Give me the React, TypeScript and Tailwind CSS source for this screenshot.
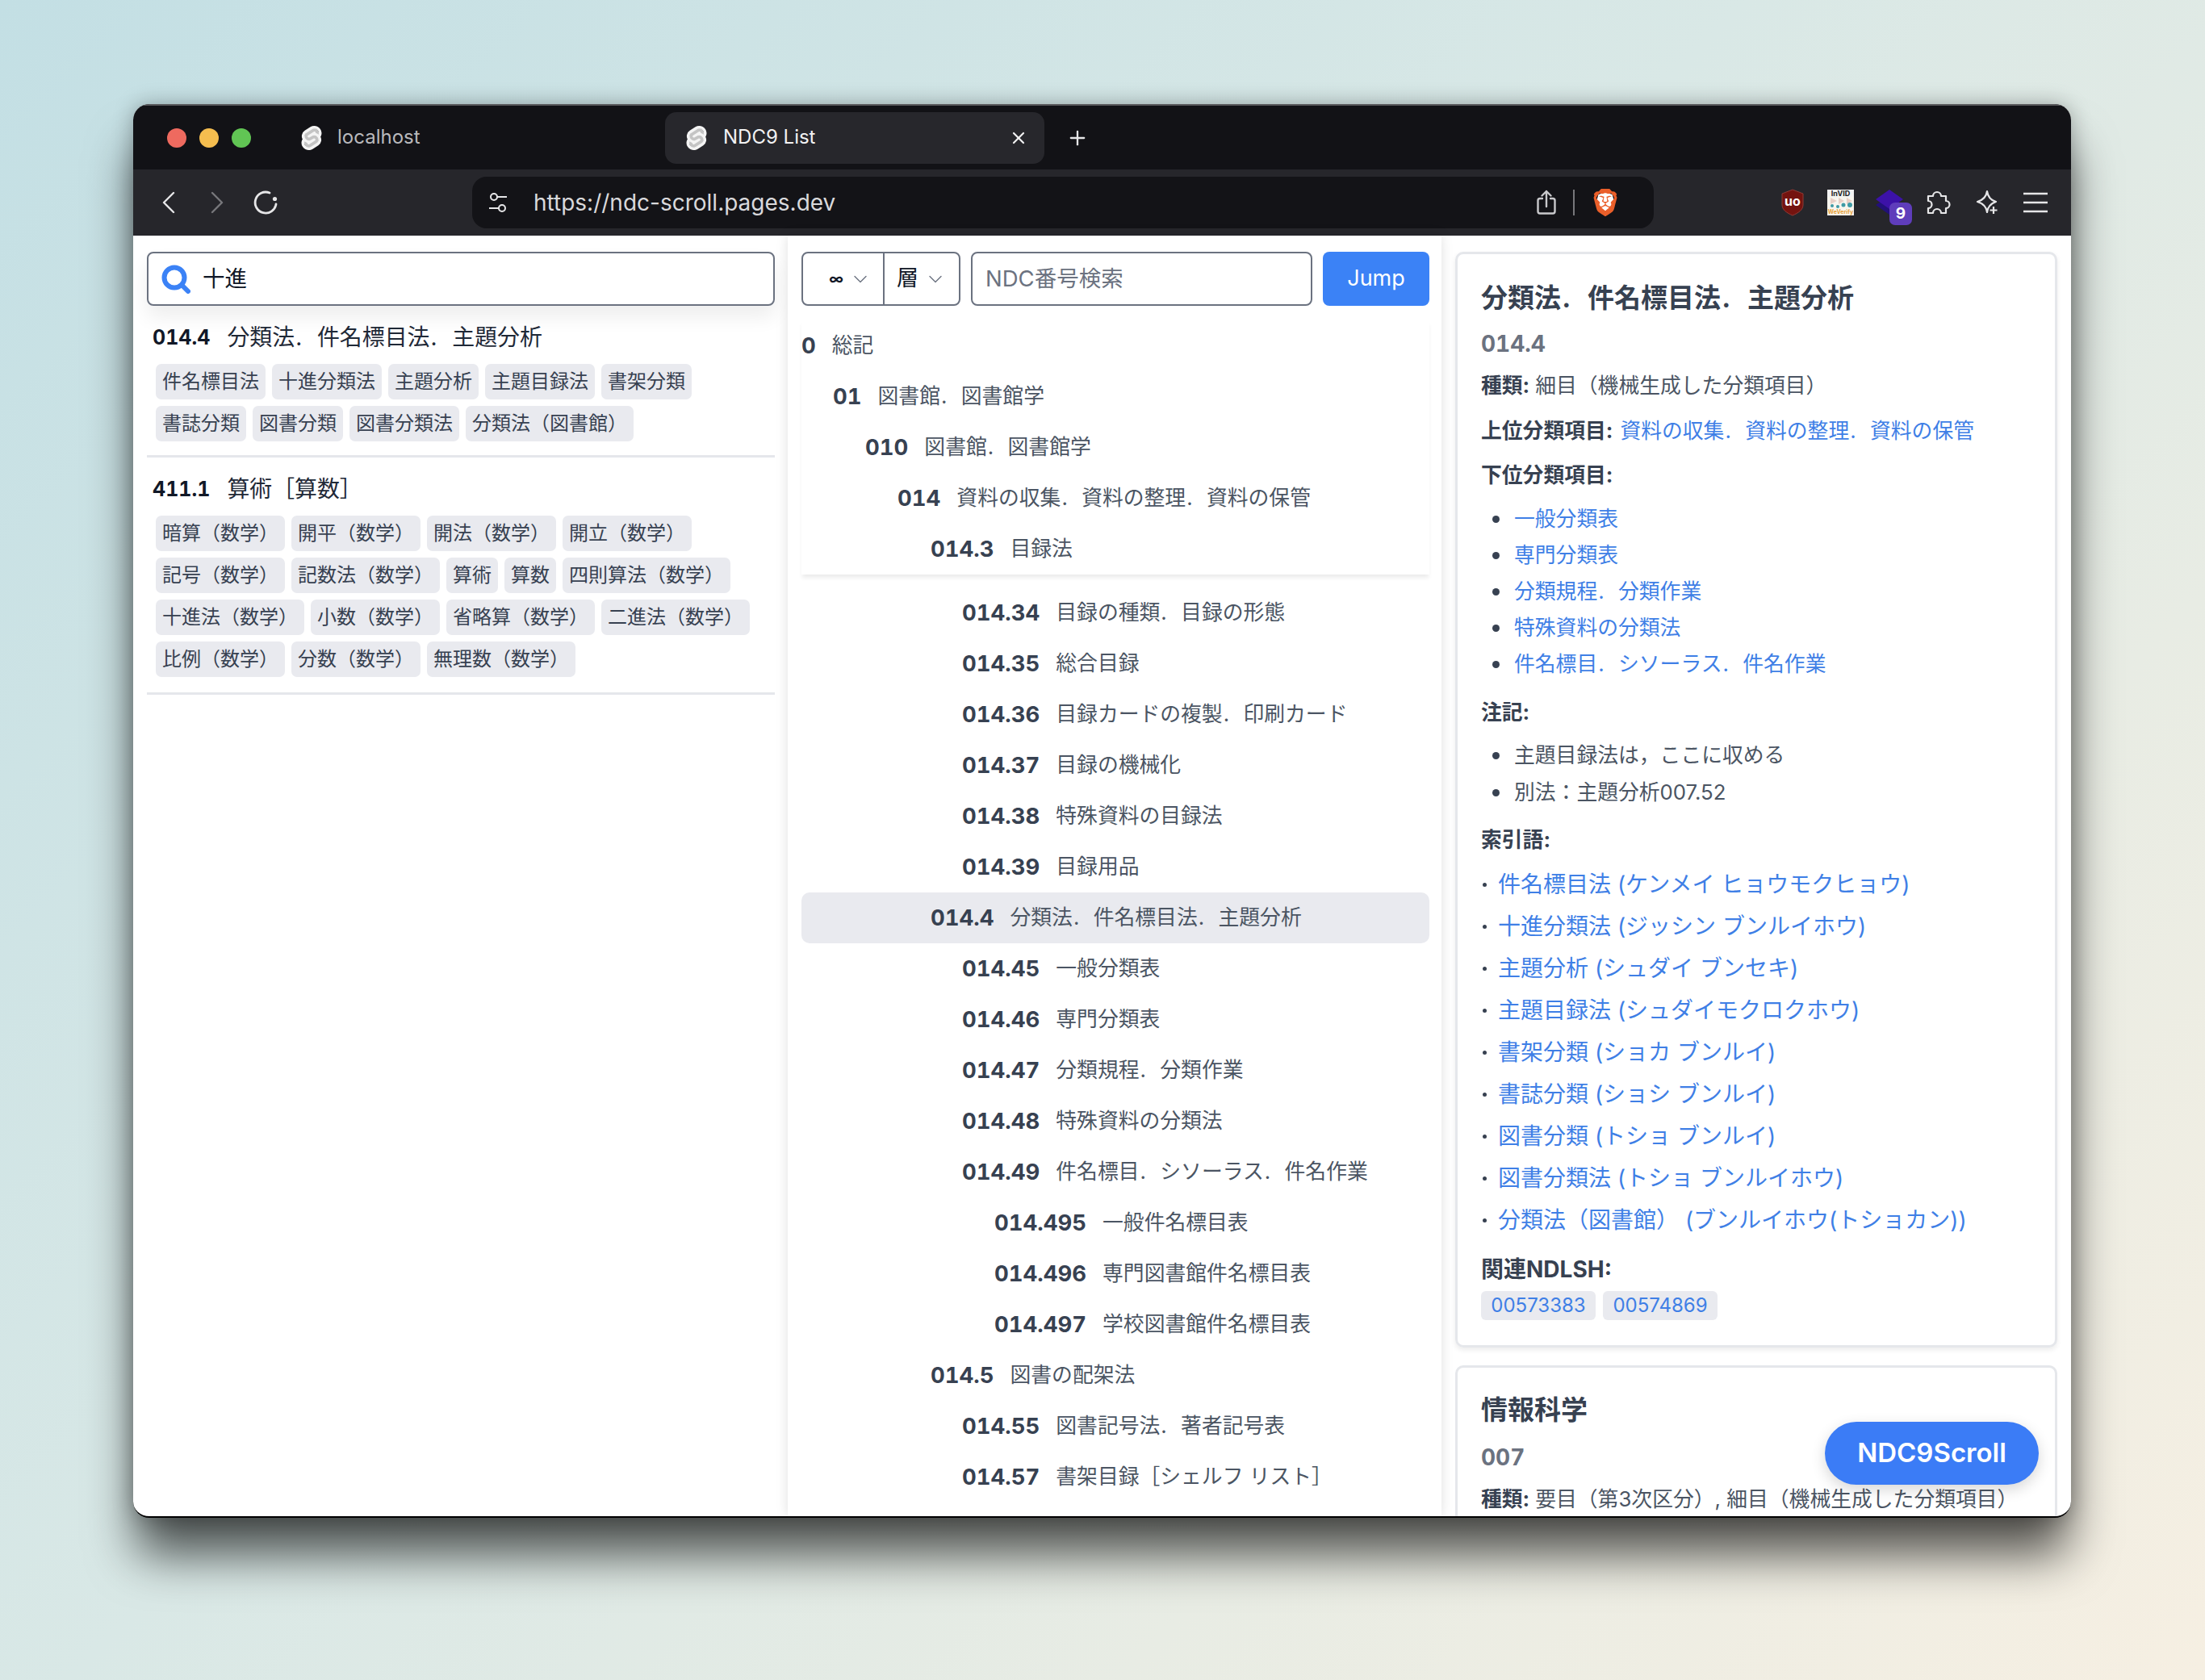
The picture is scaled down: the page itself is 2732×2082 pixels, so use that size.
import { ChevronDown, Plus, X } from "lucide-react";
import { SiBrave, SiSvelte } from "react-icons/si";

type Row = { no: string; text: string; level: number; active?: boolean };

const pinned: Row[] = [
  { no: "0", text: "総記", level: 0 },
  { no: "01", text: "図書館．図書館学", level: 1 },
  { no: "010", text: "図書館．図書館学", level: 2 },
  { no: "014", text: "資料の収集．資料の整理．資料の保管", level: 3 },
  { no: "014.3", text: "目録法", level: 4 },
];

const rows: Row[] = [
  { no: "014.34", text: "目録の種類．目録の形態", level: 5 },
  { no: "014.35", text: "総合目録", level: 5 },
  { no: "014.36", text: "目録カードの複製．印刷カード", level: 5 },
  { no: "014.37", text: "目録の機械化", level: 5 },
  { no: "014.38", text: "特殊資料の目録法", level: 5 },
  { no: "014.39", text: "目録用品", level: 5 },
  { no: "014.4", text: "分類法．件名標目法．主題分析", level: 4, active: true },
  { no: "014.45", text: "一般分類表", level: 5 },
  { no: "014.46", text: "専門分類表", level: 5 },
  { no: "014.47", text: "分類規程．分類作業", level: 5 },
  { no: "014.48", text: "特殊資料の分類法", level: 5 },
  { no: "014.49", text: "件名標目．シソーラス．件名作業", level: 5 },
  { no: "014.495", text: "一般件名標目表", level: 6 },
  { no: "014.496", text: "専門図書館件名標目表", level: 6 },
  { no: "014.497", text: "学校図書館件名標目表", level: 6 },
  { no: "014.5", text: "図書の配架法", level: 4 },
  { no: "014.55", text: "図書記号法．著者記号表", level: 5 },
  { no: "014.57", text: "書架目録［シェルフ リスト］", level: 5 },
];

const indent = ["pl-0", "pl-[39px]", "pl-[79px]", "pl-[119px]", "pl-[160px]", "pl-[199px]", "pl-[239px]"];

const results = [
  {
    no: "014.4",
    title: "分類法．件名標目法．主題分析",
    tags: ["件名標目法", "十進分類法", "主題分析", "主題目録法", "書架分類", "書誌分類", "図書分類", "図書分類法", "分類法（図書館）"],
  },
  {
    no: "411.1",
    title: "算術［算数］",
    tags: [
      "暗算（数学）",
      "開平（数学）",
      "開法（数学）",
      "開立（数学）",
      "記号（数学）",
      "記数法（数学）",
      "算術",
      "算数",
      "四則算法（数学）",
      "十進法（数学）",
      "小数（数学）",
      "省略算（数学）",
      "二進法（数学）",
      "比例（数学）",
      "分数（数学）",
      "無理数（数学）",
    ],
  },
];

const children = ["一般分類表", "専門分類表", "分類規程．分類作業", "特殊資料の分類法", "件名標目．シソーラス．件名作業"];
const notes = ["主題目録法は，ここに収める", "別法：主題分析007.52"];
const indexTerms = [
  "件名標目法 (ケンメイ ヒョウモクヒョウ)",
  "十進分類法 (ジッシン ブンルイホウ)",
  "主題分析 (シュダイ ブンセキ)",
  "主題目録法 (シュダイモクロクホウ)",
  "書架分類 (ショカ ブンルイ)",
  "書誌分類 (ショシ ブンルイ)",
  "図書分類 (トショ ブンルイ)",
  "図書分類法 (トショ ブンルイホウ)",
  "分類法（図書館） (ブンルイホウ(トショカン))",
];

// the full-width period sits low and left in the reference font
function Ja({ text }: { text: string }) {
  const parts = text.split("．");
  return (
    <>
      {parts.map((p, i) => (
        <span key={i}>
          {p}
          {i < parts.length - 1 ? <span className="inline-block w-[1em] pl-[0.04em]">.</span> : null}
        </span>
      ))}
    </>
  );
}

function SvelteIcon() {
  return (
    <svg width="30" height="30" viewBox="0 0 24 24">
      <ellipse cx="12" cy="12" rx="7.500" ry="10.500" transform="rotate(18 12 12)" fill="#c4c4c4" />
      <svg width="24" height="24" viewBox="0 0 24 24">
        <SiSvelte size={24} color="#f4f4f4" />
      </svg>
    </svg>
  );
}

function TreeRow({ row }: { row: Row }) {
  return (
    <div className={`flex h-[63px] items-center rounded-[10px] ${indent[row.level]} ${row.active ? "bg-[#e9eaef]" : ""}`}>
      <span className="text-[27.500px] font-bold tabular-nums text-[#374151]">{row.no}</span>
      <span className="ml-[20px] text-[25.800px] text-[#4b5563]">
        <Ja text={row.text} />
      </span>
    </div>
  );
}

function Toolbar() {
  return (
    <div className="flex h-[82px] items-center bg-[#26262b] text-[#e6e6e8]">
      <div className="flex w-[420px] items-center pl-[14px]">
        <span className="flex w-[60px] justify-center">
          <svg width="18" height="28" viewBox="0 0 18 28" fill="none" stroke="currentColor" strokeWidth="2.400" strokeLinecap="round" strokeLinejoin="round">
            <path d="M15 2 3 14l12 12" />
          </svg>
        </span>
        <span className="flex w-[60px] justify-center text-[#77777b]">
          <svg width="18" height="28" viewBox="0 0 18 28" fill="none" stroke="currentColor" strokeWidth="2.400" strokeLinecap="round" strokeLinejoin="round">
            <path d="M3 2l12 12L3 26" />
          </svg>
        </span>
        <span className="flex w-[60px] justify-center">
          <svg width="30" height="30" viewBox="0 0 30 30" fill="none" stroke="currentColor" strokeWidth="2.800" strokeLinecap="round">
            <path d="M20 3A13 13 0 1 0 28 17" />
            <circle cx="26.500" cy="10.500" r="2.600" fill="currentColor" stroke="none" />
          </svg>
        </span>
      </div>
      <div className="flex h-[64px] w-[1464px] items-center rounded-[18px] bg-[#131317] pl-[20px] pr-[43px]">
        <svg width="24" height="26" viewBox="0 0 24 26" fill="none" stroke="currentColor" strokeWidth="2">
          <circle cx="7" cy="6" r="4" />
          <path d="M11 6h12M1 20h12" />
          <circle cx="17" cy="20" r="4" />
        </svg>
        <span className="ml-[32px] text-[28px] text-[#d9d9dc]">https://ndc-scroll.pages.dev</span>
        <div className="ml-auto flex items-center">
          <svg width="24" height="32" viewBox="0 0 24 32" fill="none" stroke="#c9c9cc" strokeWidth="2.400" strokeLinejoin="round" strokeLinecap="round">
            <path d="M7 11H4a2.500 2.500 0 0 0-2.500 2.500V27A2.500 2.500 0 0 0 4 29.500h16a2.500 2.500 0 0 0 2.500-2.500V13.500A2.500 2.500 0 0 0 20 11h-3" />
            <path d="M12 21V2M6.500 7.500 12 2l5.500 5.500" />
          </svg>
          <span className="ml-[21px] h-[32px] w-[2px] bg-[#77777b]" />
          <svg className="ml-[21px]" width="34" height="38" viewBox="0 0 24 26">
            <path d="M6 6 12 4l6 2 1.500 5-3 6-4.500 4-4.500-4-3-6z" fill="#ffffff" />
            <svg width="24" height="26" viewBox="0 0 24 24">
              <SiBrave size={24} color="#ea5f2a" />
            </svg>
          </svg>
        </div>
      </div>
      <div className="ml-[158px] flex items-center">
        <svg width="28" height="34" viewBox="0 0 28 34">
          <path d="M14 1 27 6v14c0 6-6 10-13 13C7 30 1 26 1 20V6z" fill="#74130f" stroke="#8f3a35" />
          <text x="14" y="21" textAnchor="middle" fontSize="16" fontWeight="700" fill="#fff" fontFamily="Inter, sans-serif">uo</text>
        </svg>
        <svg className="ml-[29px]" width="33" height="32" viewBox="0 0 33 32">
          <rect width="33" height="32" fill="#f7f5ee" />
          <rect width="33" height="9" fill="#f2f2f2" />
          <text x="16.500" y="8" textAnchor="middle" fontSize="9" fontWeight="700" fill="#222" fontFamily="Inter, sans-serif">InVID</text>
          <path d="M4 10l8 4-8 4zM14 10l7 4-7 4zM24 10l7 4-7 4z" fill="#e8cfc6" />
          <circle cx="6" cy="20" r="2" fill="#3f9aa5" />
          <circle cx="13" cy="21" r="2" fill="#3f9aa5" />
          <circle cx="20" cy="19" r="2.500" fill="#3f9aa5" />
          <circle cx="28" cy="19" r="3" fill="#3f9aa5" />
          <text x="16.500" y="30" textAnchor="middle" fontSize="7" fontWeight="700" fill="#e8a23c" fontFamily="Inter, sans-serif">WeVerify</text>
        </svg>
        <div className="relative ml-[27px] h-[32px] w-[35px]">
          <svg width="35" height="32" viewBox="0 0 35 32">
            <path d="M17 8 34 19 17 31 0 19z" fill="#22107a" />
            <path d="M17 0 34 12 17 24 0 12z" fill="#3c12a8" />
          </svg>
          <span className="absolute left-[17px] top-[16px] flex h-[28px] w-[28px] items-center justify-center rounded-[7px] bg-[#5f3dbb] text-[19px] font-bold text-white">9</span>
        </div>
        <svg className="ml-[27px]" width="32" height="32" viewBox="0 0 32 32" fill="none" stroke="currentColor" strokeWidth="2.200" strokeLinejoin="round">
          <path d="M3 8h6a5 5 0 0 1 10 0h6v6a4.500 4.500 0 0 1 0 9v6h-6a5 5 0 0 0-10 0H3v-6a4.500 4.500 0 0 0 0-9z" />
        </svg>
        <svg className="ml-[29px]" width="30" height="32" viewBox="0 0 30 32" fill="none" stroke="currentColor" strokeWidth="2.200" strokeLinejoin="round">
          <path d="M15 2c1 7 4 11 11 13-6 2-10 6-11 13-1-7-5-11-12-13 7-2 11-6 12-13z" />
          <path d="M23 21v9M18.500 25.500h9" />
        </svg>
        <svg className="ml-[30px]" width="30" height="26" viewBox="0 0 30 26" stroke="currentColor" strokeWidth="2.400">
          <path d="M0 2h30M0 13h30M0 24h30" />
        </svg>
      </div>
    </div>
  );
}

function TitleBar() {
  return (
    <div className="flex h-[81px] items-center border-t-2 border-[#57575a] bg-[#121216] text-[24px]">
      <div className="ml-[42px] flex gap-[16px]">
        <span className="h-[24px] w-[24px] rounded-full bg-[#ee6a5f]" />
        <span className="h-[24px] w-[24px] rounded-full bg-[#f5bd4f]" />
        <span className="h-[24px] w-[24px] rounded-full bg-[#61c554]" />
      </div>
      <div className="ml-[48px] flex w-[465px] items-center pl-[12px] text-[#b9b9bc]">
        <SvelteIcon />
        <span className="ml-[17px] pb-[2px]">localhost</span>
      </div>
      <div className="flex h-[64px] w-[470px] items-center rounded-[14px] bg-[#27272c] pl-[24px] pr-[20px] text-[#f2f2f3]">
        <SvelteIcon />
        <span className="ml-[18px] pb-[2px]">NDC9 List</span>
        <X className="ml-auto" size={24} strokeWidth={2.200} />
      </div>
      <Plus className="ml-[27px] text-[#e6e6e8]" size={28} strokeWidth={2} />
    </div>
  );
}

function ResultsPane() {
  return (
    <div className="h-full w-[811px] shrink-0 overflow-hidden pl-[17px] pr-[16px] pt-[20px]">
      <div className="flex h-[67px] items-center rounded-[8px] border-2 border-[#6b7280] pl-[16px] shadow-[0_14px_24px_rgba(0,0,0,0.07)]">
        <svg width="36" height="36" viewBox="0 0 36 36" fill="none" stroke="#3b82f6" strokeWidth="6" strokeLinecap="round">
          <circle cx="16" cy="16" r="12.500" />
          <path d="M26 26l7 7" />
        </svg>
        <span className="ml-[15px] text-[27.500px] text-[#111827]">十進</span>
      </div>
      <div className="mt-[17px]">
        {results.map((r, i) => (
          <div key={r.no} className={`border-b-[3px] border-[#e5e7eb] ${i === 0 ? "pb-[17px] pt-[3px]" : "pb-[19px] pt-[20px]"}`}>
            <div className="flex h-[40px] items-center pl-[7px]">
              <span className="text-[25px] font-bold tabular-nums text-[#111827]">{r.no}</span>
              <span className="ml-[21px] text-[27.900px] text-[#1f2937]">
                <Ja text={r.title} />
              </span>
            </div>
            <div className="mt-[12px] flex flex-wrap gap-[8px] pl-[11px] pr-[12px]">
              {r.tags.map((t) => (
                <span key={t} className="flex h-[44px] items-center rounded-[7px] bg-[#e9eaef] px-[8px] text-[24px] text-[#374151]">
                  {t}
                </span>
              ))}
            </div>
          </div>
        ))}
      </div>
    </div>
  );
}

function TreePane() {
  return (
    <div className="relative z-10 h-full w-[810px] shrink-0 overflow-hidden bg-white pl-[17px] pr-[15px] pt-[20px] shadow-[0_0_14px_rgba(0,0,0,0.13)]">
      <div className="flex h-[67px] gap-[13px]">
        <div className="flex w-[197px] rounded-[8px] border-2 border-[#6b7280] text-[#111827]">
          <div className="flex w-[101px] items-center justify-end gap-[7px] border-r-2 border-[#6b7280] pr-[14px]">
            <span className="text-[18px] font-bold">∞</span>
            <ChevronDown className="text-[#6b7280]" size={28} strokeWidth={1.200} />
          </div>
          <div className="flex flex-1 items-center gap-[7px] pl-[15px]">
            <span className="text-[27px]">層</span>
            <ChevronDown className="text-[#6b7280]" size={28} strokeWidth={1.200} />
          </div>
        </div>
        <div className="flex w-[423px] items-center rounded-[8px] border-2 border-[#6b7280] pl-[16px] text-[27.500px] text-[#6b7280]">NDC番号検索</div>
        <button type="button" className="w-[132px] rounded-[8px] bg-[#3b82f6] text-[27px] text-white">
          Jump
        </button>
      </div>
      <div className="mt-[18px] shadow-[0_5px_5px_-1px_rgba(0,0,0,0.08)]">
        {pinned.map((r) => (
          <TreeRow key={r.no} row={r} />
        ))}
      </div>
      <div className="mt-[16px]">
        {rows.map((r) => (
          <TreeRow key={r.no} row={r} />
        ))}
      </div>
    </div>
  );
}

function DetailPane() {
  const label = "font-bold text-[#374151]";
  const link = "text-[#3f7fe6]";
  return (
    <div className="h-full flex-1 overflow-hidden pl-[17px] pr-[17px] pt-[20px] text-[25.800px] text-[#4b5563]">
      <div className="h-[1358px] rounded-[10px] border-[3px] border-[#e5e7eb] pl-[29px] pt-[33px] shadow-[0_3px_6px_rgba(0,0,0,0.08)]">
        <h2 className="flex h-[44px] items-center text-[33px] font-bold text-[#374151]">
          <span>
            <Ja text="分類法．件名標目法．主題分析" />
          </span>
        </h2>
        <p className="mt-[12px] flex h-[44px] items-center text-[28px] font-bold tabular-nums text-[#6b7280]">014.4</p>
        <p className="mt-[8px] flex h-[44px] items-center">
          <b className={label}>種類:</b>
          <span className="ml-[7px]">細目（機械生成した分類項目）</span>
        </p>
        <p className="mt-[12px] flex h-[44px] items-center">
          <b className={label}>上位分類項目:</b>
          <span className={`ml-[9px] ${link}`}>
            <Ja text="資料の収集．資料の整理．資料の保管" />
          </span>
        </p>
        <p className={`mt-[11px] flex h-[44px] items-center ${label}`}>下位分類項目:</p>
        <ul className="mt-[10px]">
          {children.map((c) => (
            <li key={c} className="flex h-[45px] items-center pl-[14px]">
              <span className="h-[9px] w-[9px] rounded-full bg-[#374151]" />
              <span className={`ml-[18px] ${link}`}>
                <Ja text={c} />
              </span>
            </li>
          ))}
        </ul>
        <p className={`mt-[15px] flex h-[44px] items-center ${label}`}>注記:</p>
        <ul className="mt-[8px]">
          {notes.map((c) => (
            <li key={c} className="flex h-[46px] items-center pl-[14px]">
              <span className="h-[9px] w-[9px] rounded-full bg-[#374151]" />
              <span className="ml-[18px]">{c}</span>
            </li>
          ))}
        </ul>
        <p className={`mt-[14px] flex h-[44px] items-center ${label}`}>索引語:</p>
        <ul className="mt-[7px]">
          {indexTerms.map((c) => (
            <li key={c} className="flex h-[52px] items-center pl-[2px]">
              <span className="h-[5px] w-[5px] rounded-full bg-[#374151]" />
              <span className={`ml-[14px] text-[28px] ${link}`}>{c}</span>
            </li>
          ))}
        </ul>
        <p className={`mt-[13px] flex h-[44px] items-center text-[28px] ${label}`}>関連NDLSH:</p>
        <div className="mt-[5px] flex gap-[9px]">
          <span className="flex h-[36px] w-[142px] items-center justify-center rounded-[6px] bg-[#e9eaef] text-[24px] text-[#3f7fe6]">00573383</span>
          <span className="flex h-[36px] w-[142px] items-center justify-center rounded-[6px] bg-[#e9eaef] text-[24px] text-[#3f7fe6]">00574869</span>
        </div>
      </div>
      <div className="mt-[22px] h-[400px] rounded-[10px] border-[3px] border-[#e5e7eb] pl-[29px] pt-[31px]">
        <h2 className="flex h-[44px] items-center text-[33px] font-bold text-[#374151]">情報科学</h2>
        <p className="mt-[14px] flex h-[44px] items-center text-[28px] font-bold tabular-nums text-[#6b7280]">007</p>
        <p className="mt-[8px] flex h-[44px] items-center">
          <b className={label}>種類:</b>
          <span className="ml-[7px]">要目（第3次区分）, 細目（機械生成した分類項目）</span>
        </p>
      </div>
    </div>
  );
}

export default function App() {
  return (
    <div className="h-[2082px] overflow-hidden bg-[linear-gradient(135deg,#c3dfe4_0%,#d9e8e6_45%,#e8ece4_72%,#f6efe2_100%)] pl-[165px] pt-[129px] [font-family:Inter,'Noto_Sans_CJK_JP',sans-serif]">
      <div className="relative flex h-[1752px] w-[2401px] flex-col overflow-hidden rounded-[20px] border-b-2 border-black bg-white shadow-[0_50px_60px_-4px_rgba(0,0,0,0.65),0_0_26px_rgba(0,0,0,0.28)]">
        <TitleBar />
        <Toolbar />
        <div className="flex min-h-0 flex-1">
          <ResultsPane />
          <TreePane />
          <DetailPane />
        </div>
        <button type="button" className="absolute left-[2096px] top-[1633px] z-20 h-[78px] w-[265px] rounded-full bg-[#3b7cf6] text-[33px] font-semibold text-white shadow-[0_6px_18px_rgba(0,0,0,0.16)]">
          NDC9Scroll
        </button>
      </div>
    </div>
  );
}
